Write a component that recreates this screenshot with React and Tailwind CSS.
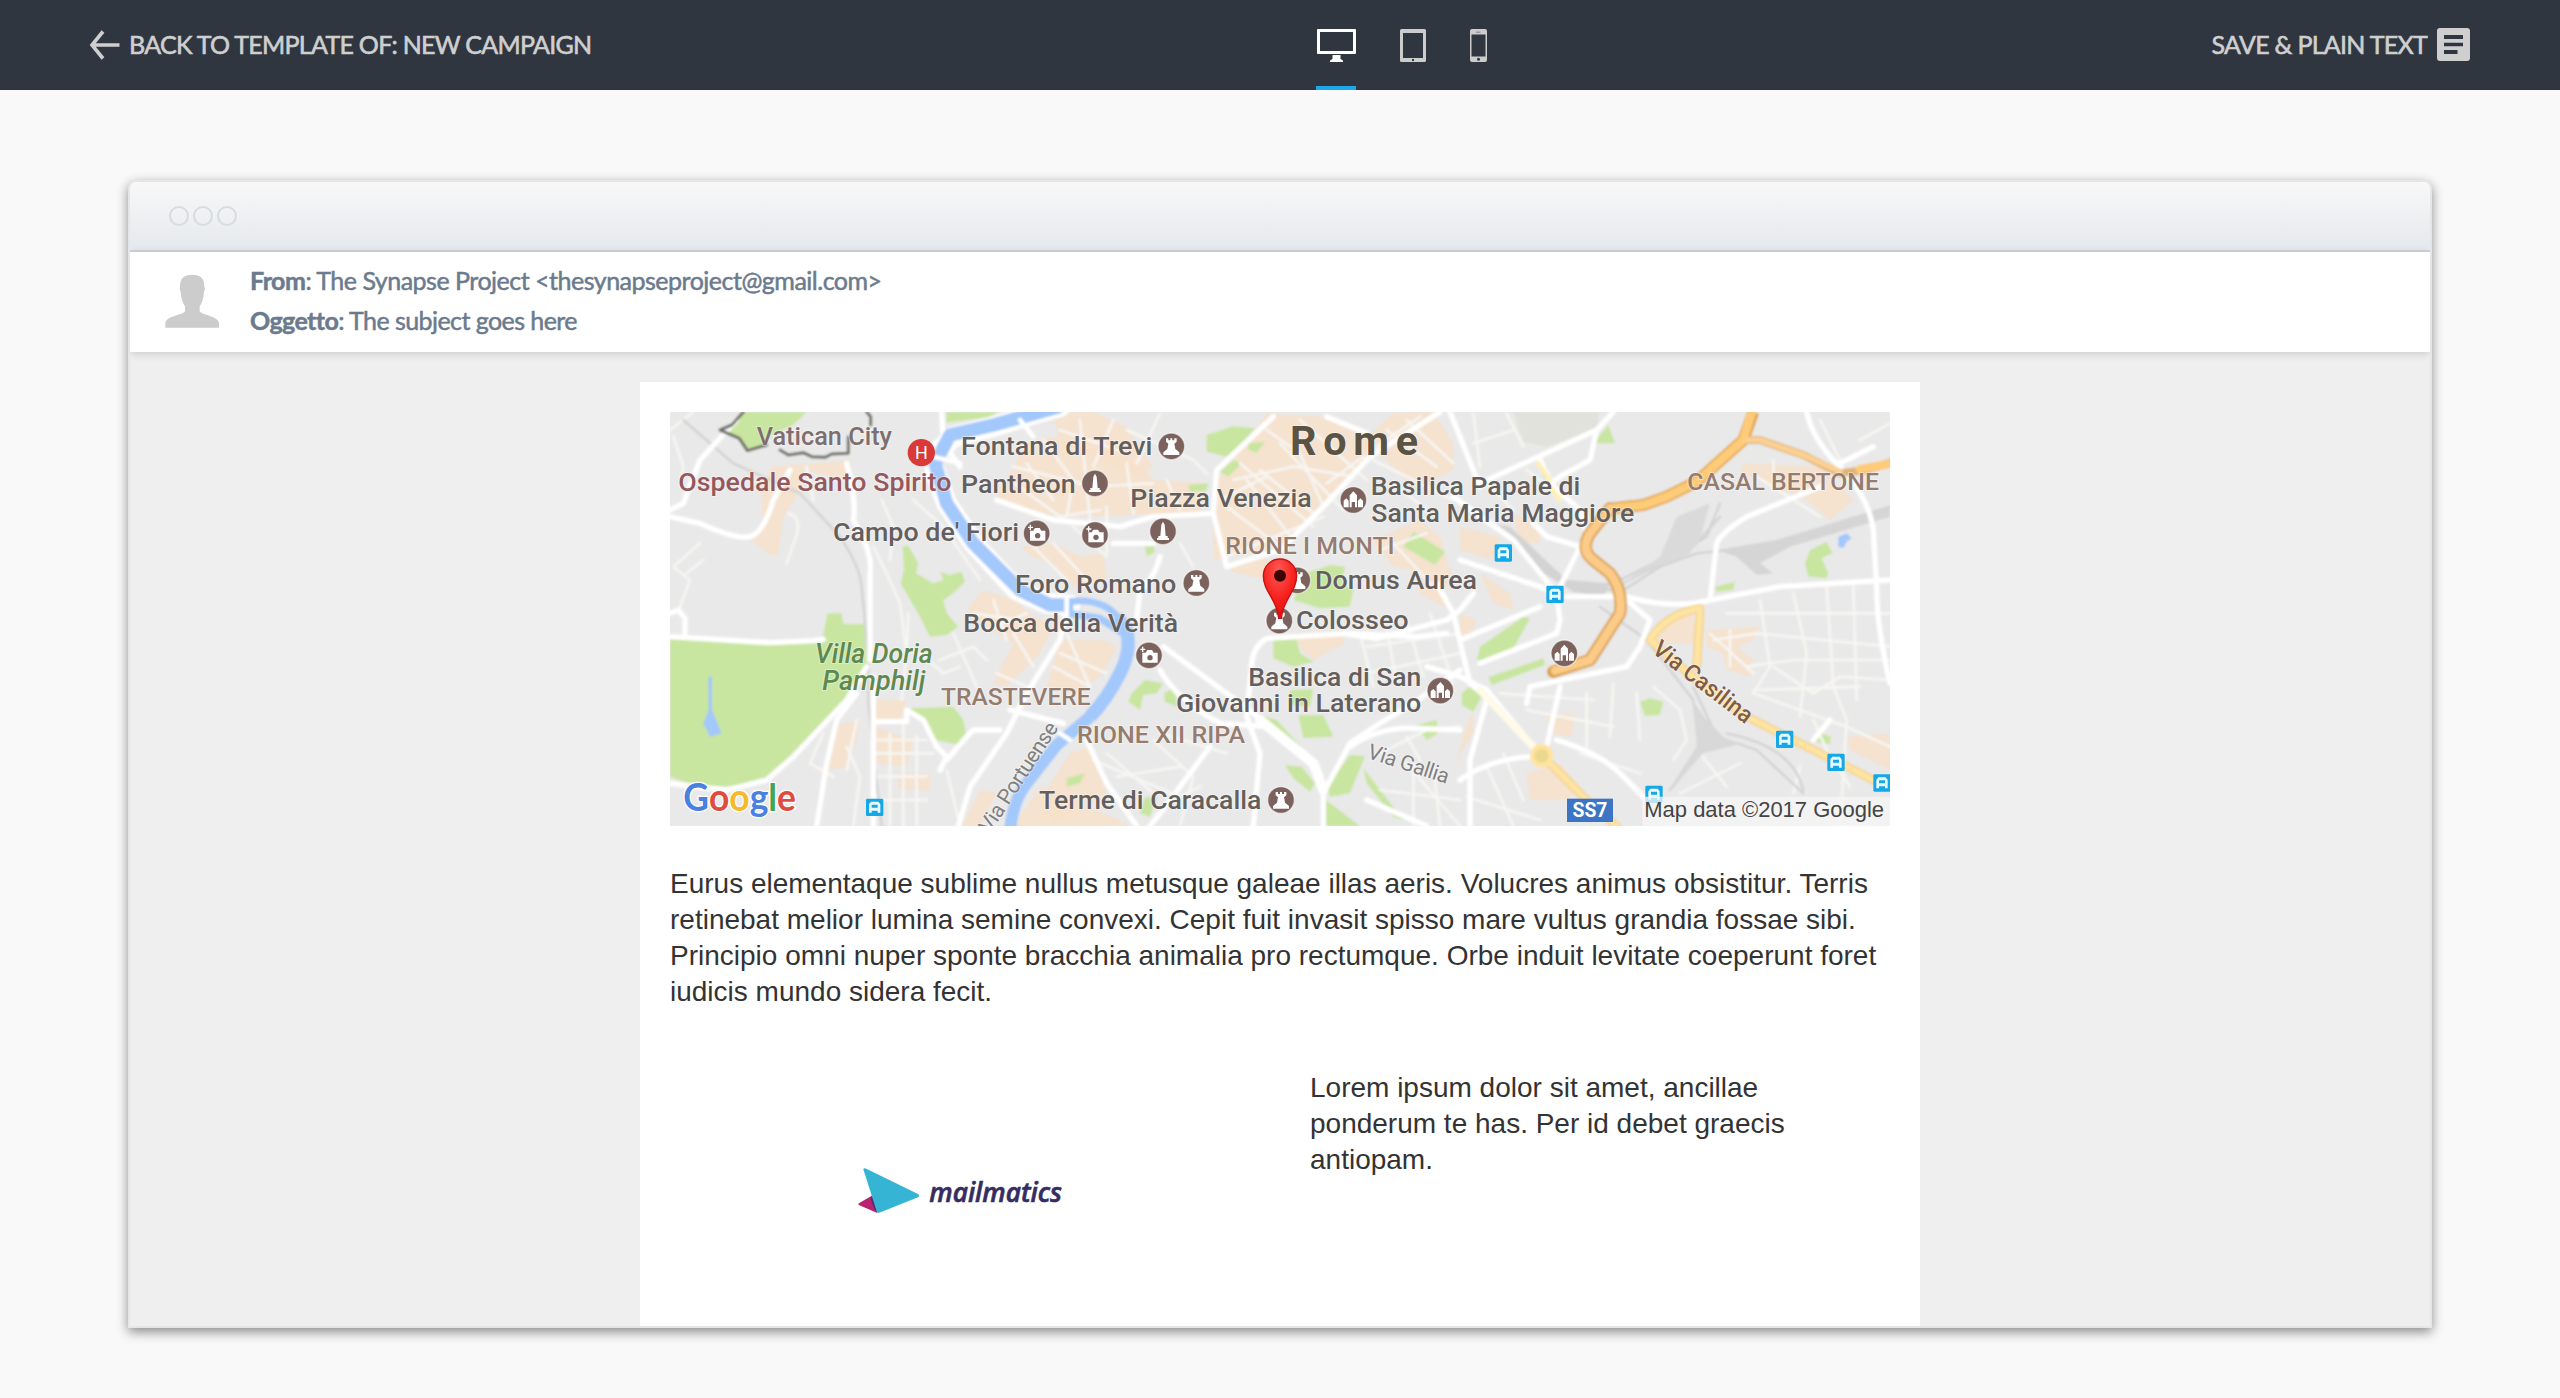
import React from "react";

const PARK = "#c8e6a0";
const BUILT = "#f7e1ca";
const WATER = "#a3c8fb";

const parks = [
  "M245 36L215 75L180 90L238 115L262 152L300 140L345 100L400 75L440 36Z",
  "M860 36H1015L985 52L858 68Z",
  "M728 440L745 437L775 490L768 520L820 550L850 540L840 515L870 525L905 515L915 545L880 580L850 600L860 640L895 680L860 705L810 710L780 650L745 590L722 550L732 510Z",
  "M502 640H545L550 672L612 672L620 790L560 890L400 1070L320 1140L200 1160L100 1155L30 1130V712L330 730L460 722L488 715Z",
  "M755 925L880 920L910 960L918 1000L900 1035L825 1020L790 960L750 945Z",
  "M1640 105L1720 78L1785 85L1740 140L1700 170L1640 155Z",
  "M1765 130L1815 125L1790 158L1765 150Z",
  "M1680 215L1720 180L1745 190L1705 230Z",
  "M1585 255L1645 250L1640 272L1590 275Z",
  "M1900 600L1935 520L2010 495L2055 500L2045 550L2080 570L2070 620L1980 625Z",
  "M1455 440L1480 430L1485 455L1460 470Z",
  "M2262 395L2355 455L2325 495L2230 440Z",
  "M1840 720L1910 718L1920 760L1960 785L1900 800L1840 775Z",
  "M1415 880L1455 840L1510 850L1490 880L1450 885L1440 930L1405 905Z",
  "M1512 880L1545 860L1550 920L1515 905Z",
  "M1800 945L1850 960L1965 1085L1930 1070L1830 985Z",
  "M1915 945L1990 945L2020 1010L1930 1015Z",
  "M1890 870L1960 868L1950 920L1890 915Z",
  "M1875 1095L1925 1100L1965 1150L1950 1175L1900 1135Z",
  "M2070 1065L2115 1068L2090 1130L2070 1180L2010 1190L2000 1160Z",
  "M2110 1105L2230 1260L2200 1250L2120 1150Z",
  "M1985 1190L2100 1278H1995Z",
  "M2405 880L2430 860L2465 890L2440 935L2405 915Z",
  "M2270 975L2330 960L2335 1000L2300 1020Z",
  "M2460 740L2590 650L2610 655L2560 745L2500 780L2450 780Z",
  "M2485 832L2650 775L2655 795L2495 855Z",
  "M2800 130L2845 75L2865 130Z",
  "M3450 450L3500 425L3518 460L3485 475L3505 520L3500 535L3445 530L3435 490Z",
  "M2940 905L2970 895L3010 905L3000 945L2955 948Z",
  "M3465 1025L3485 1000L3512 1010L3510 1032Z",
  "M2635 190L2665 200L2655 240Z",
  "M1220 1135L1275 1120L1260 1150L1220 1160Z",
  "M3165 560L3225 545L3220 570L3170 575Z",
  "M1455 1190L1490 1195L1470 1250L1440 1240Z",
];

const built = [
  "M340 200L570 180L590 330L560 240L430 210L410 290L370 350L355 465L330 465L275 420L310 380L300 250Z",
  "M1010 290L1060 200L1100 130L1180 110L1440 190L1480 240L1640 250L1620 340L1200 350L1100 330Z",
  "M1180 40L1300 36L1400 80L1430 130L1480 200L1440 230L1200 130Z",
  "M1080 440L1180 430L1260 470L1330 460L1340 540L1240 560L1190 500L1120 470Z",
  "M925 620L970 570L1060 600L1110 640L1180 680L1140 760L1040 860L1000 850L1060 730L930 650Z",
  "M1200 720L1330 720L1370 740L1330 820L1250 880L1160 860Z",
  "M645 900L740 900L720 960L640 960Z",
  "M530 975L600 960L590 1020L560 1100L500 1110Z",
  "M645 980L760 1020L740 1100L650 1090Z",
  "M715 1120H810V1170H715Z",
  "M1660 260L1820 40L1990 50L2140 120L2110 180L1990 320L1900 420L1760 460L1660 480Z",
  "M1690 500L1800 470L1870 500L1830 540L1730 520Z",
  "M2110 120L2200 40L2320 36L2380 130L2380 210L2260 270L2200 200Z",
  "M2140 420L2280 360L2340 410L2380 540L2340 580L2260 510L2200 500Z",
  "M1900 700L2040 690L2055 730L1960 780L1925 750Z",
  "M2400 380L2520 410L2500 480L2400 450Z",
  "M2460 520L2550 580L2560 630L2500 610Z",
  "M2270 520L2320 560L2370 600L2350 620L2280 580Z",
  "M1230 1060L1290 1040L1340 1180L1240 1240L1180 1270L1140 1200Z",
  "M1060 1278L1140 1160L1400 1270V1278Z",
  "M960 1170L1010 1180L960 1278H905Z",
  "M2660 940L2745 940L2735 1010L2670 1000Z",
  "M2600 1120L2700 1090L2760 1160L2720 1200L2610 1200Z",
  "M3140 690L3300 680L3280 720L3230 740L3280 780L3270 830L3200 810L3190 760L3140 740Z",
  "M3250 190L3480 200L3580 300L3510 360L3440 300L3240 220Z",
  "M2970 710L3060 650L3100 640L3110 730L3010 730Z",
  "M3560 1010L3690 1000V1110L3570 1050Z",
  "M2640 380L2560 340L2580 430L2640 430Z",
  "M2400 640L2450 660L2430 720L2400 700Z",
  "M2380 1120L2410 1000L2440 930L2440 1000L2400 1060Z",
];

const minorRoads = [
  "M30 90L100 36", "M40 110L70 200L60 260", "M60 620L90 540L40 500L120 430", "M130 480L80 520",
  "M385 340Q430 350 405 420T380 490", "M440 200L460 300", "M640 440L680 520L720 610L740 760", "M665 300L700 380L690 480",
  "M760 300L850 380L960 540", "M745 640L740 760L725 900", "M780 760L850 820L900 800", "M840 780L940 740L980 780",
  "M880 700L950 860", "M490 1000L450 1090L520 1130", "M560 1040L600 1130L580 1278", "M690 1000V1278", "M730 960V1278",
  "M770 1010V1278", "M650 1020H800", "M650 1060H820", "M650 1130H800", "M650 1200H800", "M860 1110L900 1278",
  "M590 960L560 1110", "M980 690L1100 640", "M1060 700L1120 800", "M1010 820L1100 860", "M1200 760L1340 820",
  "M1220 700L1290 860", "M1050 240L1200 350L1320 330", "M1100 190L1180 300", "M1260 60L1290 360", "M1360 60L1300 200",
  "M1150 120L1240 240L1220 350", "M1060 200L1300 260L1480 250", "M1200 90L1400 160", "M1400 190L1420 340",
  "M1500 40L1430 190", "M1400 90L1600 180L1640 220", "M1520 240L1560 330", "M1340 320L1340 460", "M1240 380L1340 470",
  "M1120 440L1220 540", "M1180 430L1280 540", "M940 640L1080 660M1000 600L1040 720", "M1180 800L1290 860",
  "M1560 430L1600 500", "M1760 240L1900 420", "M1700 320L1860 440", "M1800 210L1960 340", "M1860 130L2050 330",
  "M1720 240L1900 200L2080 230", "M1740 190L1960 380", "M1680 300L1820 230", "M1820 90L1920 160L1990 320",
  "M1920 60L2120 240", "M2000 250L2110 170", "M1700 470L1990 350", "M2140 180L2380 300", "M2240 60L2380 190",
  "M2180 90L2330 200M2150 140L2280 50", "M2200 250L2300 330", "M2200 430L2320 560", "M2160 450L2300 400", "M2100 700L2140 860",
  "M2180 680L2210 850", "M2240 660L2290 830", "M2310 640L2380 850", "M2120 740L2400 700", "M2120 820L2400 760",
  "M1480 1020L1600 1130L1560 1278", "M1340 1060L1480 1180", "M1500 1000L1700 1060", "M1370 1130L1560 1100",
  "M1300 1080L1560 1190L1620 1160", "M2240 1090L2400 1278", "M2160 1060L2300 990L2400 980", "M2260 1090L2260 1278",
  "M2320 1100L2340 1278", "M2160 1170L2400 1200", "M2240 1010L2280 1080", "M2520 880L2800 900", "M2600 930L2860 980",
  "M2780 880V1040", "M2860 850L2850 1010", "M2930 880L2940 1020", "M2760 1060L2940 1120", "M2480 1100L2560 1278",
  "M2530 1060L2590 1200", "M2420 1190L2640 1260", "M3200 640H3690", "M3160 720L3290 700L3690 740", "M3260 800L3400 780H3690",
  "M3280 870L3600 860", "M3300 600L3330 800L3280 880", "M3400 580L3440 760L3420 950", "M3500 560L3520 860L3560 960",
  "M3580 560L3590 900", "M3280 880L3560 980L3690 1040", "M3340 800L3460 880L3540 830L3690 840", "M3100 900L3160 1000",
  "M3120 1060L3200 1160", "M3060 1180L3240 1090", "M3560 960L3540 1278", "M3420 1100L3400 1180",
  "M3460 960L3500 1050L3570 1160", "M2980 860L3060 930L3080 1020L3040 1080", "M2440 40L2460 200", "M2560 90L2440 130",
  "M2540 40L2590 140", "M2600 210L2720 300", "M2480 250L2560 330", "M3480 60L3540 180", "M3600 120L3690 70",
  "M3290 230L3480 350", "M3340 180L3340 270", "M3150 700L3280 820M3210 690V800",
];

const roads = [
  "M230 60L120 180L70 310L30 330", "M30 350L120 370Q230 420 270 410T340 300L390 210", "M30 640L55 630L75 655V700",
  "M560 190Q590 300 580 360Q640 460 630 520L630 780", "M30 710L330 728L460 722L490 718",
  "M620 800L560 900L400 1070L320 1140L200 1170L100 1160L30 1150", "M590 880L530 960L500 1090L470 1278", "M640 830V1278",
  "M640 965H740V930L790 960L830 1040L860 1070L840 1110M860 1080L920 1010L940 990H1020",
  "M1220 620L1200 720L1100 880L1040 1000L930 1160L895 1278", "M1050 930L1210 970", "M845 36L850 130L900 200",
  "M1840 50L1670 210L1660 340L1700 500L1860 450L1990 320L2130 170L2340 36", "M2000 50L2120 100", "M2370 36L2460 260",
  "M1010 300L1180 360L1380 380L1480 350L1660 340", "M1500 470Q1480 540 1440 570L1430 660", "M1360 430H1480",
  "M2360 700L2270 710L2060 700L1820 715Q1780 740 1775 790L1760 950L1800 1060L1780 1278",
  "M2440 580L2400 630L2360 660L2150 715L2050 700", "M2330 550L2380 640L2430 850L2480 890",
  "M1510 740L1700 880L1820 970L1960 1090L1990 1170V1278", "M1500 810Q1550 900 1680 970L1820 980",
  "M1990 1180L2070 1030L2160 970L2260 910L2400 810", "M2300 800L2400 830L2480 870L2620 1040",
  "M2070 1040Q2160 980 2260 985L2400 990", "M1280 1020L1340 1150L1430 1278", "M1650 1040L1500 1240L1470 1278",
  "M2120 1200L2300 1278", "M2380 290L2560 420L2690 580", "M2400 480L2640 560L2690 580L2700 660L2690 700L2460 790",
  "M2860 36L2810 90L2460 250", "M2810 90L2790 180L2700 230L2660 260", "M2640 180L2680 260L2760 330L2780 400L2700 560",
  "M2400 720L2640 620", "M2620 370L2660 410L2760 440", "M2720 590H2900Q3000 620 3100 610L3360 560L3690 540",
  "M2900 600L2970 660L2940 740L2900 800L2610 860L2600 910", "M2700 860L2660 1040", "M2480 900L2430 1080L2430 1278",
  "M2400 1140Q2500 1070 2630 1070", "M2690 1020Q2820 1060 2880 1120L2960 1200", "M3150 600L3170 430Q3180 400 3260 350L3480 260",
  "M3440 36Q3460 130 3560 220Q3630 310 3640 390L3650 560Q3650 680 3690 850", "M3540 190L3640 140", "M3510 960L3460 1020",
];

const rails = [
  "M70 60L220 190L420 280L540 410Q600 500 605 560L625 780V900L640 1060L665 1278",
  "M2520 380Q2600 460 2700 540L2850 570L3100 440L3180 350", "M2860 590L3000 500L3110 460L3300 440L3690 320",
  "M2880 540L3040 460L3120 330", "M3080 340L3090 440L3140 410L3180 310", "M2820 620L2960 720L3100 900L3120 1060L3030 1170",
  "M3100 860L3170 1010L3290 1050L3430 1180", "M3200 1000Q3400 1040 3430 1170",
];

const labels = [
  { t: "Vatican City", x: 290, y: 135, w: 406, c: "#7d6f6f" },
  { t: "Ospedale Santo Spirito", x: 55, y: 273, w: 819, c: "#95595d" },
  { t: "Fontana di Trevi", x: 903, y: 164, w: 574 },
  { t: "Pantheon", x: 903, y: 279, w: 344 },
  { t: "Campo de' Fiori", x: 519, y: 422, w: 558 },
  { t: "Foro Romano", x: 1065, y: 578, w: 484 },
  { t: "Bocca della Verità", x: 910, y: 695, w: 644 },
  { t: "Terme di Caracalla", x: 1137, y: 1228, w: 667 },
  { t: "Piazza Venezia", x: 1411, y: 322, w: 544 },
  { t: "Basilica Papale di", x: 2132, y: 286, w: 629 },
  { t: "Santa Maria Maggiore", x: 2134, y: 366, w: 789 },
  { t: "Domus Aurea", x: 1965, y: 566, w: 486 },
  { t: "Colosseo", x: 1908, y: 688, w: 338 },
  { t: "Basilica di San", x: 1765, y: 857, w: 519 },
  { t: "Giovanni in Laterano", x: 1548, y: 937, w: 736 },
  { t: "TRASTEVERE", x: 843, y: 915, w: 449, c: "#967c6f", s: 71 },
  { t: "RIONE I MONTI", x: 1696, y: 463, w: 508, c: "#967c6f", s: 71 },
  { t: "RIONE XII RIPA", x: 1251, y: 1028, w: 504, c: "#967c6f", s: 71 },
  { t: "CASAL BERTONE", x: 3082, y: 271, w: 575, c: "#967c6f", s: 71 },
];

const pois = [
  ["castle", 1534, 139], ["castle", 1609, 549], ["castle", 1912, 541], ["castle", 1858, 662], ["castle", 1863, 1200],
  ["obelisk", 1305, 250], ["obelisk", 1509, 394],
  ["camera", 1130, 400], ["camera", 1305, 405], ["camera", 1467, 766],
  ["church", 2080, 300], ["church", 2341, 872], ["church", 2713, 760],
];

const glyphs = {
  castle: "M-16 -24h7v6h6v-6h6v6h6v-6h7v10l-7 6 3 16 12 10v8h-48v-8l12 -10 3 -16 -7 -6z",
  obelisk: "M0 -29L5 -20L8 14H14V20H18V26H-18V20H-14V14H-8L-5 -20Z",
  camera: "M-20 -8h10l5 -8h14l5 8h12v30h-46zM-26 -20h5v-6h4v6h6v4h-6v6h-4v-6h-5z",
  church: "M-29 2L-21 -5L-14 2V22H-29ZM14 2L21 -5L29 2V22H14ZM-11 22V-14L0 -26L11 -14V22H5V6H-5V22Z",
};

const stations = [[644, 1222], [2530, 459], [2685, 583], [2982, 1183], [3374, 1018], [3528, 1087], [3666, 1149]];

function Poi({ kind, x, y }) {
  return (
    <g transform={`translate(${x} ${y})`}>
      <circle r="40" fill="#7c625d" stroke="#ffffff" strokeOpacity="0.6" strokeWidth="4" />
      <path d={glyphs[kind]} fill="#fff" />
      {kind === "camera" && <circle cx="3" cy="7" r="8" fill="#7c625d" />}
    </g>
  );
}

function Station({ x, y }) {
  return (
    <g transform={`translate(${x} ${y})`}>
      <rect x="-26" y="-26" width="52" height="52" rx="4" fill="#16a8e6" />
      <path fillRule="evenodd" d="M-11 -17H11L17 -9V16H9V10H-9V16H-17V-9ZM-9 -8V1H9V-8Z" fill="#e8fbff" />
    </g>
  );
}

function RomeMap() {
  return (
    <svg viewBox="30 36 3660 1242" className="block h-[414px] w-[1220px]" fontFamily='Roboto, "Liberation Sans", sans-serif'>
      <defs>
        <filter id="soft" x="0" y="0" width="100%" height="100%">
          <feGaussianBlur stdDeviation="3" />
        </filter>
        <radialGradient id="pin" cx="0.45" cy="0.2" r="0.8">
          <stop offset="0" stopColor="#ff5a55" />
          <stop offset="0.6" stopColor="#f5201c" />
          <stop offset="1" stopColor="#e01010" />
        </radialGradient>
      </defs>
      <rect x="30" y="36" width="3660" height="1242" fill="#e9e9e9" />
      <g filter="url(#soft)" fill="none" strokeLinejoin="round" strokeLinecap="round">
        <rect x="0" y="0" width="3720" height="1310" fill="#e9e9e9" />
        <path d="M2560 36H2815V85L2660 140L2590 125Z" fill="#e1e2db" />
        {built.map((d) => <path key={d} d={d} fill={BUILT} fillOpacity="0.85" />)}
        {parks.map((d) => <path key={d} d={d} fill={PARK} />)}
        {minorRoads.map((d) => <path key={d} d={d} stroke="#f7f6f3" strokeWidth="8" />)}
        {rails.map((d) => <path key={d} d={d} stroke="#d2d2d2" strokeWidth="7" />)}
        <path d="M2500 370L2550 380L2720 540L2850 550L2830 590L2740 575L2620 500Z" fill="#d3d3d3" />
        <path d="M2860 570L3000 470L3050 350L3150 310L3120 420L3080 470L2980 500Z" fill="#dadada" />
        <path d="M3170 450L3350 420L3690 320V350L3390 440L3300 490L3340 520L3290 525L3230 470Z" fill="#d5d5d5" />
        <path d="M3100 900L3140 960L3200 1020L3250 1030L3130 1060L3020 1180L3110 1040Z" fill="#d8d8d8" />
        {roads.map((d) => <path key={d} d={d} stroke="#ffffff" strokeWidth="16" />)}
        <path d="M1800 960L1960 1090L1990 1170" stroke="#fff" strokeWidth="30" />
        <path d="M2460 870L2620 1040" stroke="#fffbe8" strokeWidth="22" />
        <g stroke="#ffffff" strokeWidth="62">
          <path d="M1200 20L1140 36L1000 80L880 110L840 150" />
          <path d="M825 215L860 310L940 430L1070 570L1160 610L1230 615" />
        </g>
        <g stroke={WATER} strokeWidth="40" strokeLinecap="butt">
          <path d="M1200 20L1140 36L1000 75L870 105L825 190L860 310L940 430L1080 570L1170 615H1240" />
          <path d="M1290 950L1190 1035L1100 1150Q1060 1200 1050 1290" strokeWidth="36" />
          <path d="M1370 650L1395 680Q1420 740 1380 820T1290 950" />
          <path d="M1200 608Q1330 585 1380 660" strokeWidth="20" />
        </g>
        <path d="M1225 640L1320 655L1390 700" stroke={WATER} strokeWidth="22" />
        <path d="M1220 590V660M1080 60L1120 110M1200 1000L1230 1020M820 170L900 190" stroke="#fff" strokeWidth="14" />
        <path d="M145 830H156V930L185 1000L150 1010L130 970L146 930Z" fill={WATER} />
        <path d="M3535 410L3560 400L3575 415L3560 425L3550 445L3535 440Z" fill={WATER} />
        <path d="M250 36L215 75L180 90L238 115L262 152L320 135M360 150L385 165L430 158L455 170L495 172L515 162L565 160V110M620 36L632 50V75" stroke="#6c6c66" strokeWidth="9" />
        <path d="M3280 36L3250 120L3110 245L3020 290L2950 315L2860 325" stroke="#e0a648" strokeWidth="36" strokeLinecap="butt" />
        <path d="M3260 120L3300 120L3430 165L3540 220L3620 210L3700 185" stroke="#dfb474" strokeWidth="24" />
        <path d="M2850 325L2790 400Q2760 450 2800 480L2850 520Q2890 570 2880 640L2790 780L2680 815" stroke="#d9a04c" strokeWidth="38" />
        <path d="M3280 20L3250 120L3110 245L3020 290L2950 315L2860 325" stroke="#fecb78" strokeWidth="26" />
        <path d="M3260 120L3300 120L3430 165L3540 215" stroke="#fbd092" strokeWidth="17" />
        <path d="M3600 208L3700 190" stroke="#fecb78" strokeWidth="26" />
        <path d="M2850 325L2790 400Q2760 450 2800 480L2850 520Q2890 570 2880 640L2790 780L2685 812" stroke="#fccb88" strokeWidth="26" />
        <g stroke="#efcf86" strokeWidth="26">
          <path d="M3120 640L3110 800M3120 625Q3020 640 2970 720L3110 840L3260 950L3400 1020L3560 1100L3660 1150" />
          <path d="M2645 1065L2780 1200L2870 1278" />
        </g>
        <g stroke="#ffe3a0" strokeWidth="19">
          <path d="M3120 640L3110 800M3120 625Q3020 640 2970 720L3110 840L3260 950L3400 1020L3560 1100L3660 1150" />
          <path d="M2645 1065L2780 1200L2870 1278" />
        </g>
        <path d="M2635 190L2670 240M2670 260L2700 300" stroke="#fff0b5" strokeWidth="14" />
        <circle cx="2645" cy="1067" r="28" fill="#ead98c" stroke="#ffe3a0" strokeWidth="14" />
      </g>

      {stations.map(([x, y]) => <Station key={x} x={x} y={y} />)}
      {pois.map(([k, x, y]) => <Poi key={`${x}-${y}`} kind={k} x={x} y={y} />)}
      <circle cx="784" cy="158" r="41" fill="#d93a37" />
      <text x="784" y="178" fontSize="54" textAnchor="middle" fill="#fff">H</text>

      <g stroke="#ffffff" strokeOpacity="0.4" strokeWidth="6" paintOrder="stroke" strokeLinejoin="round" fontWeight="500">
        {labels.map((l) => (
          <text key={l.t} x={l.x} y={l.y} fontSize={l.s || 79} fill={l.c || "#645f5d"} textLength={l.w} lengthAdjust="spacingAndGlyphs">
            {l.t}
          </text>
        ))}
        <g fill="#5f8950" fontStyle="italic" fontSize="80">
          <text x="465" y="789" textLength="353" lengthAdjust="spacingAndGlyphs">Villa Doria</text>
          <text x="487" y="870" textLength="309" lengthAdjust="spacingAndGlyphs">Pamphilj</text>
        </g>
        <text x="1890" y="165" fontSize="124" fontWeight="700" fill="#5b5344" textLength="384">Rome</text>
        <g fontWeight="400" fill="#808080" fontSize="64">
          <text transform="translate(990 1302) rotate(-57)" textLength="380">Via Portuense</text>
          <text transform="translate(2119 1073) rotate(18)" textLength="253">Via Gallia</text>
        </g>
        <text transform="translate(2973 756) rotate(37.5)" fontSize="72" fill="#7f5b49" textLength="357" lengthAdjust="spacingAndGlyphs">Via Casilina</text>
      </g>

      <g transform="translate(1860 527)">
        <path d="M-4 128C-8 70 -50 50 -50 0A50 50 0 0 1 50 0C50 50 8 70 4 128Z" fill="url(#pin)" stroke="#c5120f" strokeWidth="4" />
        <circle r="18" fill="#3c0505" />
      </g>

      <text x="70" y="1232" fontSize="112" fontFamily='Lato, "Liberation Sans", sans-serif' fontWeight="700" textLength="338" stroke="#fff" strokeWidth="8" paintOrder="stroke" lengthAdjust="spacingAndGlyphs">
        <tspan fill="#4a80e0">G</tspan>
        <tspan fill="#e04a3f">o</tspan>
        <tspan fill="#f5b92b">o</tspan>
        <tspan fill="#4a80e0">g</tspan>
        <tspan fill="#3fa558">l</tspan>
        <tspan fill="#e04a3f">e</tspan>
      </text>

      <rect x="2721" y="1196" width="138" height="70" fill="#3d74c4" />
      <text x="2790" y="1250" fontSize="58" fontWeight="700" textAnchor="middle" fill="#fff">SS7</text>
      <rect x="2947" y="1190" width="743" height="88" fill="#f5f5f5" fillOpacity="0.75" />
      <text x="2953" y="1251" fontSize="68" fill="#444" fontFamily='"Liberation Sans", sans-serif' textLength="719" lengthAdjust="spacingAndGlyphs">
        Map data ©2017 Google
      </text>
    </svg>
  );
}

function ArrowIcon() {
  return (
    <svg viewBox="0 0 31 30" className="h-[30px] w-[31px]" fill="none" stroke="#cfcfcf" strokeWidth="3.6">
      <path d="M14 1.500L3 15L14 28.500M3 15H30.500" />
    </svg>
  );
}

function MonitorIcon() {
  return (
    <svg viewBox="0 0 39 33" className="h-[33px] w-[39px]" fill="#fff">
      <path fillRule="evenodd" d="M1 0H38Q39 0 39 1V24Q39 25 38 25H1Q0 25 0 24V1Q0 0 1 0ZM3 3V22H36V3Z" />
      <path d="M15.500 26H23.500V30L26 31.500V33H13V31.500L15.500 30Z" />
    </svg>
  );
}

function TabletIcon() {
  return (
    <svg viewBox="0 0 26 33" className="h-[33px] w-[26px]" fill="#ccc">
      <path fillRule="evenodd" d="M1.500 0H24.500Q26 0 26 1.500V31.500Q26 33 24.500 33H1.500Q0 33 0 31.500V1.500Q0 0 1.500 0ZM3 4V29H23V4ZM12 30V32H14V30Z" />
    </svg>
  );
}

function PhoneIcon() {
  return (
    <svg viewBox="0 0 17 33" className="h-[33px] w-[17px]" fill="#ccc">
      <path fillRule="evenodd" d="M2 0H15Q17 0 17 2V31Q17 33 15 33H2Q0 33 0 31V2Q0 0 2 0ZM1.500 5.500V27.500H15.500V5.500Z" />
      <rect x="6" y="2.500" width="4.500" height="1.500" fill="#999" />
      <circle cx="8.500" cy="30.200" r="1.500" fill="#2f3640" />
    </svg>
  );
}

function TextIcon() {
  return (
    <svg viewBox="0 0 33 33" className="h-[33px] w-[33px]">
      <rect width="33" height="33" rx="3" fill="#cfcfcf" />
      <path d="M7 7H26V11H7ZM7 14.700H26V18.300H7ZM7 22H20.500V26H7Z" fill="#2f3640" />
    </svg>
  );
}

function Avatar() {
  return (
    <svg viewBox="135 313 162 161" className="h-[54px] w-[54px]" fill="#ccc">
      <path d="M217 315C240 315 254 325 253 352C256 356 254 362 252 366C251 385 246 400 239 410V424C246 436 292 438 297 458V474H136V458C140 438 188 436 195 424V410C188 400 183 385 182 366C180 362 178 356 180 352C179 325 194 315 217 315Z" />
    </svg>
  );
}

function Logo() {
  return (
    <svg viewBox="0 0 720 240" className="h-[80px] w-[240px]">
      <path d="M58 165L98 142L112 195L58 172Q52 168 58 165Z" fill="#b8246f" />
      <path d="M98 142L112 195L104 186L92 152Z" fill="#5b2a70" />
      <path d="M70 64Q72 59 79 62L234 138Q241 143 234 148L118 194Q112 196 110 190Z" fill="#35b5d3" />
      <text x="268" y="162" fontSize="83" fontStyle="italic" fontWeight="600" fontFamily='"Open Sans", Lato, sans-serif' fill="#352d62" stroke="#352d62" strokeWidth="2" textLength="398" lengthAdjust="spacingAndGlyphs">
        mailmatics
      </text>
    </svg>
  );
}

export default function App() {
  return (
    <div className="flex h-[1398px] w-[2560px] flex-col overflow-hidden bg-[#f9f9f9] font-['Lato','Liberation_Sans',sans-serif]">
      <header className="flex h-[90px] shrink-0 border-b border-[#332f3e] bg-[#2f3640] text-[25px] tracking-[-0.71px] text-[#cfcfcf] [-webkit-text-stroke:0.6px_#cfcfcf]">
        <a className="flex w-[1316px] items-center gap-[9px] pl-[89px]">
          <ArrowIcon />
          <span>BACK TO TEMPLATE OF: NEW CAMPAIGN</span>
        </a>
        <nav className="flex h-[90px]">
          <span className="flex w-[40px] items-center justify-center border-b-4 border-[#1ca8e8] pt-1"><MonitorIcon /></span>
          <span className="ml-[44px] flex items-center pt-px"><TabletIcon /></span>
          <span className="ml-[44px] flex items-center pt-px"><PhoneIcon /></span>
        </nav>
        <a className="ml-auto flex items-center gap-[10px] pr-[90px]">
          <span>SAVE &amp; PLAIN TEXT</span>
          <TextIcon />
        </a>
      </header>

      <main className="mx-[128px] mt-[90px] flex h-[1148px] flex-col overflow-hidden rounded-t-[8px] border-2 border-[#e6e6e6] bg-[#efefef] shadow-[0_4px_12px_rgba(0,0,0,0.45)]">
        <div className="flex h-[70px] shrink-0 items-center gap-1 border-b-2 border-[#cdd3d8] bg-linear-to-b from-[#f8f8f8] to-[#e5e9ed] pl-[39px]">
          <span className="size-5 rounded-full border-2 border-[#d5dce2]" />
          <span className="size-5 rounded-full border-2 border-[#d5dce2]" />
          <span className="size-5 rounded-full border-2 border-[#d5dce2]" />
        </div>
        <section className="flex h-[100px] shrink-0 items-start bg-white pl-[35px] text-[25px] leading-[40px] text-[#6b7b8d] shadow-[0_2px_8px_rgba(0,0,0,0.15)]">
          <div className="pt-[22px]"><Avatar /></div>
          <div className="pt-[8px] pl-[31px] [-webkit-text-stroke:0.5px_#6b7b8d]">
            <p className="tracking-[-0.5px]"><b>From</b>: The Synapse Project &lt;thesynapseproject@gmail.com&gt;</p>
            <p className="tracking-[-0.56px]"><b>Oggetto</b>: The subject goes here</p>
          </div>
        </section>
        <article className="mx-auto mt-[30px] flex w-[1280px] grow flex-col bg-white px-[30px] pt-[30px] font-['Liberation_Sans',Arial,sans-serif] text-[28px] leading-[36px] text-[#333]">
          <RomeMap />
          <p className="mt-[40px] whitespace-nowrap">
            Eurus elementaque sublime nullus metusque galeae illas aeris. Volucres animus obsistitur. Terris<br />
            retinebat melior lumina semine convexi. Cepit fuit invasit spisso mare vultus grandia fossae sibi.<br />
            Principio omni nuper sponte bracchia animalia pro rectumque. Orbe induit levitate coeperunt foret<br />
            iudicis mundo sidera fecit.
          </p>
          <div className="mt-[60px] flex">
            <div className="w-[640px] pt-[78px] pl-[170px]"><Logo /></div>
            <p className="whitespace-nowrap">
              Lorem ipsum dolor sit amet, ancillae<br />
              ponderum te has. Per id debet graecis<br />
              antiopam.
            </p>
          </div>
        </article>
      </main>
    </div>
  );
}
